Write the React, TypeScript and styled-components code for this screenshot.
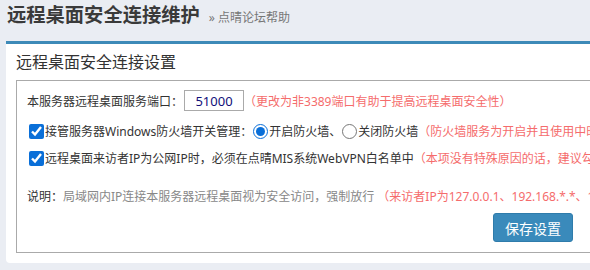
import React, { useState } from "react";
import styled, { createGlobalStyle } from "styled-components";

const GlobalStyle = createGlobalStyle`
  body {
    margin: 0;
    background: #eaedf3;
    overflow: hidden;
    font-family: "Noto Sans", "Noto Sans CJK SC", sans-serif;
  }
`;

const Page = styled.div`
  padding-left: 6px;
  width: 1100px;
`;

const Header = styled.div`
  box-sizing: border-box;
  height: 41px;
  padding: 2px 0 0 1px;
  display: flex;
  align-items: baseline;
  gap: 9px;
  white-space: nowrap;
`;

const Title = styled.h1`
  margin: 0;
  font-size: 19.3px;
  line-height: 26px;
  font-weight: bold;
  color: #3a3a3a;
`;

const Crumb = styled.a`
  font-size: 12px;
  color: #777;
  text-decoration: none;
`;

const Panel = styled.section`
  background: #fff;
  border-top: 3px solid #3d8ab8;
  border-radius: 0 0 4px 4px;
  padding: 0 0 10px 10px;
`;

const PanelTitle = styled.h2`
  margin: 0;
  height: 36px;
  line-height: 36px;
  font-size: 16px;
  font-weight: normal;
  color: #333;
`;

const Fieldset = styled.div`
  border: 1px solid #aaa;
  border-right: none;
  padding: 9px 0 10px 10px;
  font-size: 12px;
  color: #333;
  white-space: nowrap;
`;

const Row = styled.div<{ $gap?: number }>`
  display: flex;
  align-items: center;
  height: ${(p) => (p.$gap === undefined ? 21 : 20)}px;
  margin-top: ${(p) => p.$gap ?? 0}px;
`;

const PortInput = styled.input`
  box-sizing: border-box;
  width: 60px;
  height: 21px;
  margin: 0 0 0 1px;
  border: 1px solid #aaa;
  text-align: center;
  font-family: inherit;
  font-size: 13px;
  color: #10107a;
  outline: none;
`;

const Check = styled.input`
  width: 15px;
  height: 15px;
  margin: 0 1px 0 2px;
  accent-color: #0a6fd8;
`;

const Radio = styled.input`
  width: 15px;
  height: 15px;
  margin: 0 1px;
  accent-color: #0a6fd8;
`;

const Hint = styled.span<{ $offset?: number }>`
  color: #f56c6c;
  margin-left: ${(p) => p.$offset ?? 0}px;
`;

const Muted = styled.span`
  color: #888;
`;

const SaveButton = styled.button`
  margin: 7px 0 0 466px;
  width: 80px;
  height: 29px;
  background: #3a8abb;
  border: 1px solid #2f7cab;
  border-radius: 3px;
  color: #fff;
  font-family: inherit;
  font-size: 14px;
  cursor: pointer;
`;

export default function App() {
  const [port, setPort] = useState("51000");
  const [takeOver, setTakeOver] = useState(true);
  const [firewall, setFirewall] = useState("on");
  const [whitelist, setWhitelist] = useState(true);

  return (
    <>
      <GlobalStyle />
      <Page>
        <Header>
          <Title>远程桌面安全连接维护</Title>
          <Crumb href="#">» 点晴论坛帮助</Crumb>
        </Header>
        <Panel>
          <PanelTitle>远程桌面安全连接设置</PanelTitle>
          <Fieldset>
            <Row>
              本服务器远程桌面服务端口：
              <PortInput value={port} onChange={(e) => setPort(e.target.value)} />
              <Hint>（更改为非3389端口有助于提高远程桌面安全性）</Hint>
            </Row>
            <Row $gap={10}>
              <Check
                type="checkbox"
                checked={takeOver}
                onChange={(e) => setTakeOver(e.target.checked)}
              />
              接管服务器Windows防火墙开关管理：
              <Radio
                type="radio"
                name="fw"
                checked={firewall === "on"}
                onChange={() => setFirewall("on")}
              />
              开启防火墙、
              <Radio
                type="radio"
                name="fw"
                checked={firewall === "off"}
                onChange={() => setFirewall("off")}
              />
              关闭防火墙
              <Hint>（防火墙服务为开启并且使用中时，建议开启防火墙）</Hint>
            </Row>
            <Row $gap={7}>
              <Check
                type="checkbox"
                checked={whitelist}
                onChange={(e) => setWhitelist(e.target.checked)}
              />
              远程桌面来访者IP为公网IP时，必须在点晴MIS系统WebVPN白名单中
              <Hint>（本项没有特殊原因的话，建议勾选）</Hint>
            </Row>
            <Row $gap={18}>
              说明：
              <Muted>局域网内IP连接本服务器远程桌面视为安全访问，强制放行</Muted>
              <Hint $offset={3}>（来访者IP为127.0.0.1、192.168.*.*、10.*.*.*）</Hint>
            </Row>
            <SaveButton>保存设置</SaveButton>
          </Fieldset>
        </Panel>
      </Page>
    </>
  );
}
